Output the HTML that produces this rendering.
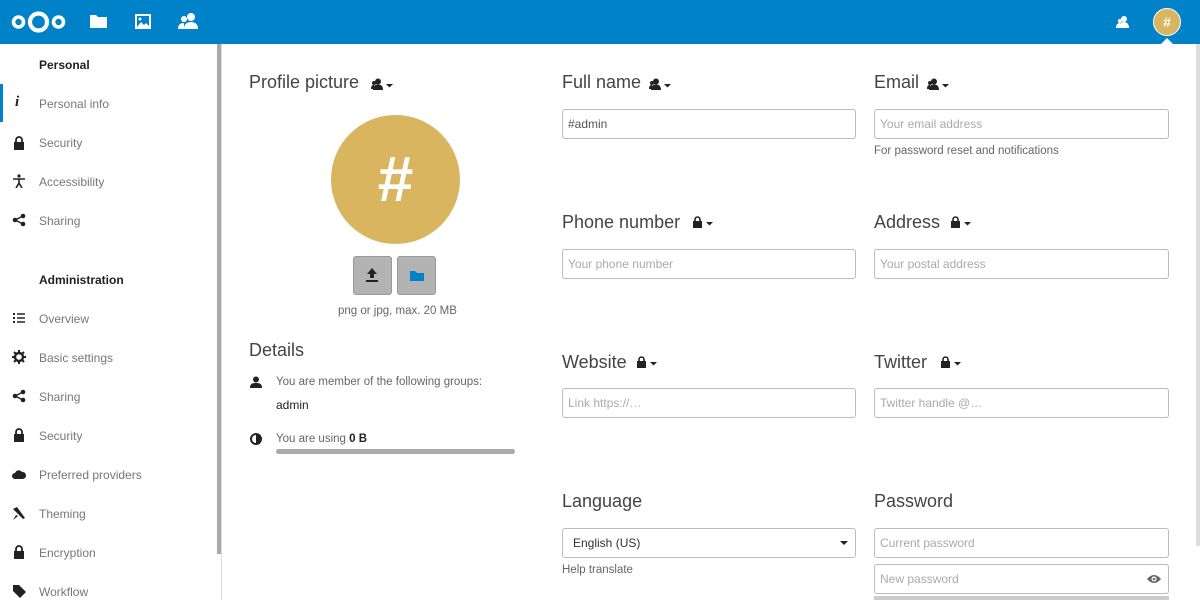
<!DOCTYPE html>
<html><head><meta charset="utf-8"><style>
*{box-sizing:border-box;margin:0;padding:0}
body{width:1200px;height:600px;overflow:hidden;background:#fff;font-family:"Liberation Sans",sans-serif;position:relative;color:#222}
.hdr{position:absolute;left:0;top:0;width:1200px;height:44px;background:#0082c9}
.a{position:absolute}
.nav{font-size:12px;color:#777}
.navh{font-size:12px;color:#222;font-weight:bold}
.h{font-size:18px;color:#444;font-weight:normal}
.inp{position:absolute;height:30px;border:1px solid #bbb;border-radius:3px;font-size:12px;color:#aaa;padding:7px 5px;background:#fff}
.small{font-size:11.5px;color:#666}
.ico{position:absolute;left:12px;width:14px;height:14px}
</style></head><body>
<svg width="0" height="0" style="position:absolute"><defs>
<g id="pc"><circle cx="7" cy="3.5" r="3" fill="#222"/><path d="M2 12c0-4 2-5.5 5-5.5s5 1.5 5 5.5z" fill="#222"/><circle cx="3" cy="5" r="2" fill="#222"/><path d="M0 11c0-3 1-4 3-4v4z" fill="#222"/><path d="M15 6h7l-3.5 3.5z" fill="#222"/></g>
<g id="lc"><rect x="1" y="5" width="9" height="7" fill="#222"/><path d="M3 5V3.5a2.5 2.5 0 015 0V5" fill="none" stroke="#222" stroke-width="1.6"/><path d="M14 6h7l-3.5 3.5z" fill="#222"/></g>
</defs></svg>
<div class="hdr">
<svg class="a" style="left:10px;top:9px" width="57" height="26" viewBox="0 0 57 26"><circle cx="8.5" cy="13" r="5" fill="none" stroke="#fff" stroke-width="3.6"/><circle cx="28.5" cy="13" r="8.5" fill="none" stroke="#fff" stroke-width="4.2"/><circle cx="48.5" cy="13" r="5" fill="none" stroke="#fff" stroke-width="3.6"/></svg>
<svg class="a" style="left:90px;top:14px" width="17" height="14"><path d="M0 1h6l2 2h9v11H0z" fill="#fff"/></svg>
<svg class="a" style="left:135px;top:14px" width="16" height="15"><rect x="1" y="1" width="14" height="13" fill="none" stroke="#fff" stroke-width="2"/><path d="M2 13l4-5 3 3 2-2 4 4z" fill="#fff"/><circle cx="5" cy="5" r="1.5" fill="#fff"/></svg>
<svg class="a" style="left:178px;top:12px" width="20" height="18"><circle cx="13" cy="5" r="4" fill="#fff"/><path d="M6 17c0-5 3-7 7-7s7 2 7 7z" fill="#fff"/><circle cx="6" cy="7" r="3" fill="#fff"/><path d="M0 17c0-4 2-6 6-6v6z" fill="#fff"/></svg>
<svg class="a" style="left:1116px;top:15px" width="14" height="14"><circle cx="8" cy="4" r="3" fill="#fff"/><path d="M3 13c0-4 2-6 5-6s5 2 5 6z" fill="#fff"/><circle cx="4" cy="6" r="2" fill="#fff"/><path d="M0 13c0-3 1-5 4-5v5z" fill="#fff"/></svg>
<div class="a" style="left:1153px;top:8px;width:28px;height:28px;border-radius:50%;background:#d8b55e;border:1px solid #fff;color:#fff;font-size:14px;text-align:center;line-height:26px;font-weight:bold">#</div>
<div class="a" style="left:1161px;top:38px;width:0;height:0;border:6px solid transparent;border-bottom-color:#fff;border-top:0"></div>
</div>
<div class="a" style="left:217px;top:44px;width:4px;height:510px;background:#aaa"></div>
<div class="a" style="left:221px;top:44px;width:1px;height:556px;background:#ddd"></div>
<div class="a" style="left:1196px;top:44px;width:4px;height:502px;background:#ddd"></div>
<div class="a" style="left:0;top:84px;width:3px;height:38px;background:#0082c9"></div>
<div class="a navh" style="left:39px;top:58px">Personal</div>
<div class="a" style="left:15px;top:94px;font-family:'Liberation Serif',serif;font-style:italic;font-size:15px;font-weight:bold">i</div>
<div class="a nav" style="left:39px;top:97px">Personal info</div>
<div class="a nav" style="left:39px;top:136px">Security</div>
<div class="a nav" style="left:39px;top:175px">Accessibility</div>
<div class="a nav" style="left:39px;top:214px">Sharing</div>
<div class="a navh" style="left:39px;top:273px">Administration</div>
<div class="a nav" style="left:39px;top:312px">Overview</div>
<div class="a nav" style="left:39px;top:351px">Basic settings</div>
<div class="a nav" style="left:39px;top:390px">Sharing</div>
<div class="a nav" style="left:39px;top:429px">Security</div>
<div class="a nav" style="left:39px;top:468px">Preferred providers</div>
<div class="a nav" style="left:39px;top:507px">Theming</div>
<div class="a nav" style="left:39px;top:546px">Encryption</div>
<div class="a nav" style="left:39px;top:585px">Workflow</div>
<svg class="ico" style="top:136px" viewBox="0 0 14 14"><rect x="2" y="6" width="10" height="8" fill="#222"/><path d="M4 6V4a3 3 0 016 0v2" fill="none" stroke="#222" stroke-width="1.8"/></svg>
<svg class="ico" style="top:174px" viewBox="0 0 14 14"><circle cx="7" cy="2" r="1.6" fill="#222"/><path d="M1 5h12M7 5v4l-3 5M7 9l3 5" stroke="#222" stroke-width="1.6" fill="none"/></svg>
<svg class="ico" style="top:213px" viewBox="0 0 14 14"><circle cx="3" cy="7" r="2.3" fill="#222"/><circle cx="11" cy="3" r="2.3" fill="#222"/><circle cx="11" cy="11" r="2.3" fill="#222"/><path d="M3 7l8-4M3 7l8 4" stroke="#222" stroke-width="1.5"/></svg>
<svg class="ico" style="top:311px" viewBox="0 0 14 14"><path d="M1 2h2v2H1zM1 6h2v2H1zM1 10h2v2H1z" fill="#222"/><path d="M5 3h8M5 7h8M5 11h8" stroke="#222" stroke-width="1.6"/></svg>
<svg class="ico" style="top:350px" viewBox="0 0 14 14"><circle cx="7" cy="7" r="4" fill="none" stroke="#222" stroke-width="2.4"/><path d="M7 0v3M7 11v3M0 7h3M11 7h3M2 2l2 2M10 10l2 2M2 12l2-2M10 4l2-2" stroke="#222" stroke-width="2"/></svg>
<svg class="ico" style="top:389px" viewBox="0 0 14 14"><circle cx="3" cy="7" r="2.3" fill="#222"/><circle cx="11" cy="3" r="2.3" fill="#222"/><circle cx="11" cy="11" r="2.3" fill="#222"/><path d="M3 7l8-4M3 7l8 4" stroke="#222" stroke-width="1.5"/></svg>
<svg class="ico" style="top:428px" viewBox="0 0 14 14"><rect x="2" y="6" width="10" height="8" fill="#222"/><path d="M4 6V4a3 3 0 016 0v2" fill="none" stroke="#222" stroke-width="1.8"/></svg>
<svg class="ico" style="top:467px" viewBox="0 0 14 14"><path d="M3 12a3 3 0 010-6 4 4 0 017-1 3 3 0 011 7z" fill="#222"/></svg>
<svg class="ico" style="top:506px" viewBox="0 0 14 14"><path d="M1 3l4-2 8 11-2 1z" fill="#222"/><path d="M1 14l3-5 2 1z" fill="#222"/></svg>
<svg class="ico" style="top:545px" viewBox="0 0 14 14"><rect x="2" y="6" width="10" height="8" fill="#222"/><path d="M4 6V4a3 3 0 016 0v2" fill="none" stroke="#222" stroke-width="1.8"/></svg>
<svg class="ico" style="top:584px" viewBox="0 0 14 14"><path d="M1 1h6l7 7-6 6-7-7z" fill="#222"/></svg>

<div class="a h" style="left:249px;top:72px">Profile picture</div>
<svg class="a" style="left:371px;top:78px" width="24" height="13"><use href="#pc"/></svg>
<div class="a" style="left:331px;top:115px;width:129px;height:129px;border-radius:50%;background:#d8b55e;color:#fff;font-size:64px;text-align:center;line-height:129px;font-weight:bold">#</div>
<div class="a" style="left:353px;top:256px;width:39px;height:39px;background:#b3b3b3;border:1px solid #999;border-radius:3px"></div>
<svg class="a" style="left:366px;top:268px" width="12" height="14"><path d="M6 0l5 6H8v4H4V6H1z" fill="#222"/><rect x="0" y="12" width="12" height="2" fill="#222"/></svg>
<div class="a" style="left:397px;top:256px;width:39px;height:39px;background:#b3b3b3;border:1px solid #999;border-radius:3px"></div>
<svg class="a" style="left:410px;top:270px" width="14" height="11"><path d="M0 1h5l2 2h7v8H0z" fill="#0082c9"/></svg>
<div class="a small" style="left:338px;top:305px">png or jpg, max. 20 MB</div>
<div class="a h" style="left:249px;top:340px">Details</div>
<svg class="a" style="left:250px;top:376px" width="12" height="12"><circle cx="6" cy="3.5" r="3" fill="#222"/><path d="M0 12c0-4 2-5 6-5s6 1 6 5z" fill="#222"/></svg>
<div class="a small" style="left:276px;top:376px">You are member of the following groups:</div>
<div class="a" style="left:276px;top:398px;font-size:12px;color:#222">admin</div>
<svg class="a" style="left:250px;top:433px" width="12" height="12"><circle cx="6" cy="6" r="5" fill="none" stroke="#222" stroke-width="2"/><path d="M6 1a5 5 0 010 10z" fill="#222"/></svg>
<div class="a small" style="left:276px;top:433px">You are using <b style="color:#222">0 B</b></div>
<div class="a" style="left:276px;top:449px;width:239px;height:5px;border-radius:3px;background:#aaa"></div>

<div class="a h" style="left:562px;top:72px">Full name</div><svg class="a" style="left:649px;top:78px" width="24" height="13"><use href="#pc"/></svg>
<div class="inp" style="left:562px;top:109px;width:294px;color:#555">#admin</div>
<div class="a h" style="left:874px;top:72px">Email</div><svg class="a" style="left:927px;top:78px" width="24" height="13"><use href="#pc"/></svg>
<div class="inp" style="left:874px;top:109px;width:295px">Your email address</div>
<div class="a small" style="left:874px;top:145px">For password reset and notifications</div>

<div class="a h" style="left:562px;top:212px">Phone number</div><svg class="a" style="left:692px;top:216px" width="24" height="13"><use href="#lc"/></svg>
<div class="inp" style="left:562px;top:249px;width:294px">Your phone number</div>
<div class="a h" style="left:874px;top:212px">Address</div><svg class="a" style="left:950px;top:216px" width="24" height="13"><use href="#lc"/></svg>
<div class="inp" style="left:874px;top:249px;width:295px">Your postal address</div>

<div class="a h" style="left:562px;top:352px">Website</div><svg class="a" style="left:636px;top:356px" width="24" height="13"><use href="#lc"/></svg>
<div class="inp" style="left:562px;top:388px;width:294px">Link https://…</div>
<div class="a h" style="left:874px;top:352px">Twitter</div><svg class="a" style="left:940px;top:356px" width="24" height="13"><use href="#lc"/></svg>
<div class="inp" style="left:874px;top:388px;width:295px">Twitter handle @…</div>

<div class="a h" style="left:562px;top:491px">Language</div>
<div class="inp" style="left:562px;top:528px;width:294px;color:#333;padding-left:10px">English (US)<svg style="position:absolute;right:7px;top:12px" width="8" height="5"><path d="M0 0h8L4 4z" fill="#222"/></svg></div>
<div class="a small" style="left:562px;top:564px">Help translate</div>
<div class="a h" style="left:874px;top:491px">Password</div>
<div class="inp" style="left:874px;top:528px;width:295px">Current password</div>
<div class="inp" style="left:874px;top:564px;width:295px">New password<svg style="position:absolute;right:7px;top:9px" width="14" height="10"><path d="M0 5Q7-3 14 5Q7 13 0 5z" fill="#666"/><circle cx="7" cy="5" r="2.5" fill="#fff"/><circle cx="7" cy="5" r="1.3" fill="#666"/></svg></div>
<div class="a" style="left:874px;top:596px;width:295px;height:4px;background:#ccc"></div>
</body></html>
